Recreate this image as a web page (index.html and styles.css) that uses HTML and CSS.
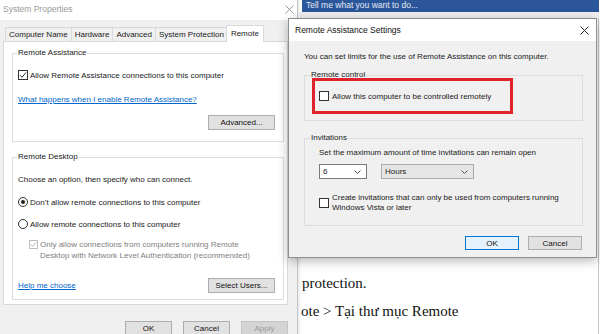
FILE: index.html
```html
<!DOCTYPE html>
<html lang="vi">
<head>
    <meta charset="UTF-8">
    <meta name="viewport" content="width=device-width, initial-scale=1.0">
    <title>Remote Assistance Settings</title>
    <link rel="stylesheet" href="styles.css">
</head>
<body>

<!-- Word window behind everything -->
<div class="word">
    <div class="word-tell"><span>Tell me what you want to do...</span></div>
    <div class="word-ribbon"></div>
    <div class="word-page">
        <p class="doc-line">protection.</p>
        <p class="doc-line doc-cut">ote &gt; Tại thư mục Remote</p>
    </div>
</div>

<!-- System Properties -->
<div class="win sysprops">
    <div class="sys-title">
        <span>System Properties</span>
        <svg class="close-x" width="9" height="9" viewBox="0 0 9 9"><path d="M0.5 0.5 L8.5 8.5 M8.5 0.5 L0.5 8.5" stroke="#9a9a9a" stroke-width="1"/></svg>
    </div>

    <div class="tabs">
        <div class="tab">Computer Name</div>
        <div class="tab">Hardware</div>
        <div class="tab">Advanced</div>
        <div class="tab">System Protection</div>
        <div class="tab active">Remote</div>
    </div>

    <div class="tab-panel">
        <fieldset class="group ra-group">
            <legend>Remote Assistance</legend>
            <div class="check-row">
                <span class="check">
                    <svg width="8" height="8" viewBox="0 0 8 8"><path d="M1 4.2 L3 6.3 L7 1.5" fill="none" stroke="#333" stroke-width="1"/></svg>
                </span>
                Allow Remote Assistance connections to this computer
            </div>
            <a class="link" href="#">What happens when I enable Remote Assistance?</a>
            <div class="btn-row">
                <button class="btn">Advanced...</button>
            </div>
        </fieldset>

        <fieldset class="group rd-group">
            <legend>Remote Desktop</legend>
            <div class="text-row">Choose an option, then specify who can connect.</div>
            <div class="check-row radio-row">
                <span class="radio on"></span>
                Don’t allow remote connections to this computer
            </div>
            <div class="check-row radio-row">
                <span class="radio"></span>
                Allow remote connections to this computer
            </div>
            <div class="sub-check">
                <span class="check disabled">
                    <svg width="7" height="7" viewBox="0 0 7 7"><path d="M0.8 3.6 L2.7 5.5 L6.2 1.2" fill="none" stroke="#b5b5b5" stroke-width="1"/></svg>
                </span>
                <span>Only allow connections from computers running Remote<br>Desktop with Network Level Authentication (recommended)</span>
            </div>
            <div class="help-row">
                <a class="link" href="#">Help me choose</a>
                <button class="btn">Select Users...</button>
            </div>
        </fieldset>
    </div>

    <div class="dlg-buttons">
        <button class="btn wide">OK</button>
        <button class="btn wide">Cancel</button>
        <button class="btn wide" disabled>Apply</button>
    </div>
</div>

<!-- Remote Assistance Settings dialog -->
<div class="win ra-dialog">
    <div class="ra-title">
        <span>Remote Assistance Settings</span>
        <svg width="9" height="9" viewBox="0 0 9 9"><path d="M0.5 0.5 L8.5 8.5 M8.5 0.5 L0.5 8.5" stroke="#222" stroke-width="1"/></svg>
    </div>
    <div class="ra-body">
        <div class="text-row">You can set limits for the use of Remote Assistance on this computer.</div>

        <fieldset class="group rc-group">
            <legend>Remote control</legend>
            <div class="redbox">
                <span class="check"></span>
                Allow this computer to be controlled remotely
            </div>
        </fieldset>

        <fieldset class="group inv-group">
            <legend>Invitations</legend>
            <div class="inv-inner">
                <div class="text-row">Set the maximum amount of time invitations can remain open</div>
                <div class="combo-row">
                    <div class="combo">
                        <span>6</span>
                        <svg width="7" height="4" viewBox="0 0 7 4"><polyline points="0.5,0.5 3.5,3.5 6.5,0.5" fill="none" stroke="#555" stroke-width="1"/></svg>
                    </div>
                    <div class="combo hours">
                        <span>Hours</span>
                        <svg width="7" height="4" viewBox="0 0 7 4"><polyline points="0.5,0.5 3.5,3.5 6.5,0.5" fill="none" stroke="#555" stroke-width="1"/></svg>
                    </div>
                </div>
                <div class="inv-check">
                    <span class="check"></span>
                    <span>Create invitations that can only be used from computers running<br>Windows Vista or later</span>
                </div>
            </div>
        </fieldset>

        <div class="ra-buttons">
            <button class="btn default">OK</button>
            <button class="btn">Cancel</button>
        </div>
    </div>
</div>

</body>
</html>
```

FILE: styles.css
```css
* {
    margin: 0;
    padding: 0;
    box-sizing: border-box;
}

body {
    width: 600px;
    height: 334px;
    overflow: hidden;
    position: relative;
    background: #fff;
    font-family: 'Liberation Sans', Arial, sans-serif;
    font-size: 8px;
    color: #1a1a1a;
}

/* ---------- Word behind ---------- */

.word {
    position: absolute;
    left: 300px;
    top: 0;
    width: 299px;
    height: 334px;
    display: flex;
    flex-direction: column;
}

.word-tell {
    height: 12px;
    margin-left: 2px;
    background: #2b579a;
    color: #e2e9f4;
    font-size: 8.5px;
    line-height: 10px;
    padding-left: 4px;
    overflow: hidden;
}

.word-tell span {
    display: block;
}

.word-ribbon {
    height: 6px;
    background: #efefef;
}

.word-page {
    flex: 1;
    border-right: 1px solid #c6c6c6;
    padding: 251px 0 0 2px;
    font-family: 'Liberation Serif', 'Times New Roman', serif;
    font-size: 15px;
    line-height: 28px;
    color: #111;
}

.doc-cut {
    margin-left: -1px;
}

/* ---------- windows ---------- */

.win {
    position: absolute;
    top: 0;
}

.sysprops {
    left: 0;
    width: 298px;
    height: 340px;
    background: #f0f0f0;
    border-right: 1px solid #c4c4c4;
    box-shadow: 1px 0 3px rgba(0,0,0,0.12);
    z-index: 1;
}

.sys-title {
    height: 20px;
    background: #fff;
    display: flex;
    align-items: center;
    justify-content: space-between;
    padding: 0 3px 2px 3px;
    font-size: 8.5px;
    color: #9a9a9a;
}

.tabs {
    display: flex;
    align-items: flex-end;
    height: 16px;
    margin-top: 5px;
    padding-left: 5px;
}

.tab {
    height: 14px;
    line-height: 13px;
    padding: 0 3px;
    border: 1px solid #d9d9d9;
    border-bottom: none;
    background: #f0f0f0;
    white-space: nowrap;
}

.tab + .tab {
    margin-left: -1px;
}

.tab.active {
    height: 17px;
    line-height: 15px;
    margin: 0 -2px -1px -2px;
    padding: 0 4px;
    background: #fff;
    position: relative;
    z-index: 1;
}

.tab-panel {
    margin: 0 9px 0 3px;
    border: 1px solid #d9d9d9;
    background: #fff;
    padding: 5px 3px 4px 8px;
}

/* group boxes */

.group {
    border: 1px solid #dcdcdc;
    min-width: 0;
}

.group legend {
    padding: 0 1px;
    margin-left: -1px;
    line-height: 12px;
}

.ra-group {
    padding: 10px 8px 11px 5px;
}

.rd-group {
    margin-top: 9px;
    padding: 11px 8px 6px 5px;
}

.text-row {
    line-height: 12px;
    white-space: nowrap;
}

.check-row {
    display: flex;
    align-items: center;
    gap: 2px;
    height: 12px;
    white-space: nowrap;
}

.radio-row {
    margin-top: 10px;
}

.check {
    flex: none;
    width: 10px;
    height: 10px;
    border: 1px solid #333;
    background: #fff;
    display: flex;
    align-items: center;
    justify-content: center;
}

.check.disabled {
    width: 9px;
    height: 9px;
    border-color: #bcbcbc;
    margin-top: 1px;
}

.radio {
    flex: none;
    width: 10px;
    height: 10px;
    border: 1px solid #333;
    border-radius: 50%;
    background: #fff;
    display: flex;
    align-items: center;
    justify-content: center;
}

.radio.on::after {
    content: '';
    width: 4px;
    height: 4px;
    border-radius: 50%;
    background: #222;
}

.sub-check {
    display: flex;
    align-items: flex-start;
    gap: 2px;
    margin-top: 9px;
    padding-left: 11px;
    line-height: 11px;
    color: #808080;
    white-space: nowrap;
}

.link {
    display: block;
    width: fit-content;
    line-height: 12px;
    color: #0066cc;
    text-decoration: underline;
}

.ra-group .link {
    margin-top: 13px;
}

.btn-row {
    display: flex;
    justify-content: flex-end;
    margin-top: 9px;
}

.btn {
    width: 67px;
    height: 15px;
    border: 1px solid #adadad;
    background: #e1e1e1;
    font-family: inherit;
    font-size: 8px;
    color: #111;
}

.btn:disabled {
    background: #d4d4d4;
    border-color: #c4c4c4;
    color: #9a9a9a;
}

.help-row {
    display: flex;
    justify-content: space-between;
    align-items: center;
    margin-top: 17px;
}

.dlg-buttons {
    display: flex;
    justify-content: flex-end;
    gap: 11px;
    margin-top: 16px;
    padding-right: 9px;
}

.btn.wide {
    width: 47px;
}

/* ---------- Remote Assistance Settings ---------- */

.ra-dialog {
    left: 288px;
    top: 18px;
    width: 309px;
    height: 240px;
    background: #f0f0f0;
    border: 1px solid #8e8e8e;
    box-shadow: 0 3px 10px rgba(0,0,0,0.28);
    z-index: 2;
}

.ra-title {
    height: 22px;
    background: #fff;
    display: flex;
    align-items: center;
    justify-content: space-between;
    padding: 0 7px 0 6px;
    font-size: 8.5px;
    color: #111;
}

.ra-body {
    padding: 10px 13px 0 15px;
}

.rc-group {
    margin-top: 6px;
    padding: 0 8px 6px 6px;
}

.redbox {
    width: 201px;
    height: 36px;
    margin: -3px 0 0 1px;
    border: 3px solid #df222b;
    display: flex;
    align-items: center;
    gap: 3px;
    padding-left: 4px;
    white-space: nowrap;
}

.inv-group {
    margin-top: 11px;
    padding: 3px 8px 12px 6px;
}

.inv-inner {
    padding-left: 8px;
}

.combo-row {
    display: flex;
    gap: 14px;
    margin-top: 5px;
}

.combo {
    width: 48px;
    height: 15px;
    border: 1px solid #7a7a7a;
    background: #fff;
    display: flex;
    align-items: center;
    justify-content: space-between;
    padding: 0 5px 0 3px;
}

.combo.hours {
    width: 93px;
    background: #e5e5e5;
    border-color: #acacac;
}

.inv-check {
    display: flex;
    align-items: center;
    gap: 3px;
    margin-top: 14px;
    line-height: 10px;
    white-space: nowrap;
}

.ra-buttons {
    display: flex;
    justify-content: flex-end;
    gap: 9px;
    margin-top: 10px;
    padding-right: 1px;
}

.ra-buttons .btn {
    width: 54px;
    height: 14px;
}

.btn.default {
    border-color: #0078d7;
    background: #e5f1fb;
}
```
